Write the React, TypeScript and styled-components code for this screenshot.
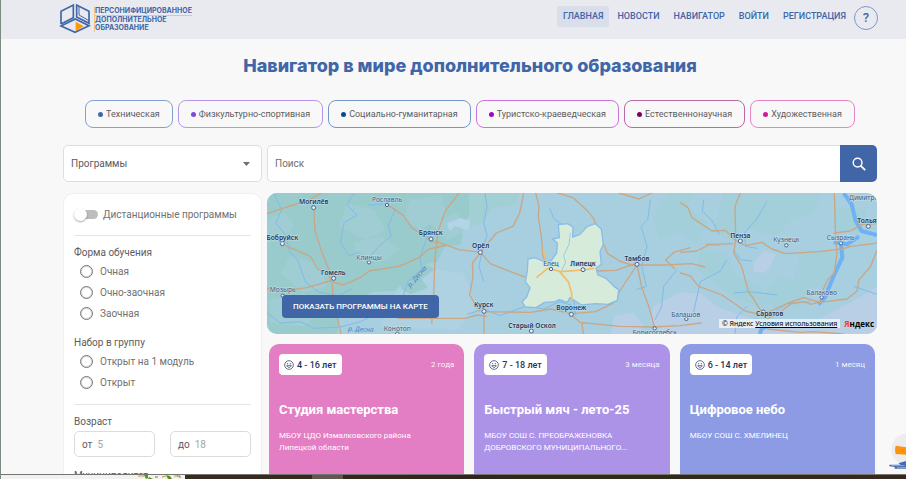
import React from "react";
import styled, { createGlobalStyle } from "styled-components";

const GlobalStyle = createGlobalStyle`
  *, *::before, *::after { box-sizing: border-box; }
  body { margin: 0; background: #f8f8f8; font-family: Roboto, "Liberation Sans", sans-serif; color: #5c5c5e; }
  button, input, select { font: inherit; color: inherit; }
`;

const blue = "#4066a8";

const Page = styled.div`
  display: flex;
  flex-direction: column;
  height: 100vh;
  overflow: hidden;
  border-left: 1px solid #7d8a80;
`;

const Header = styled.header`
  display: flex;
  flex: none;
  align-items: flex-start;
  justify-content: space-between;
  height: 39px;
  padding: 3px 28px 0 58px;
  background: #e9eaef;
`;

const Logo = styled.a`
  display: flex;
  align-items: flex-start;
  gap: 3px;
  color: ${blue};
  text-decoration: none;
`;

const LogoText = styled.span`
  display: flex;
  flex-direction: column;
  margin-top: 4px;
  border-left: 1px solid #f6c27c;
  font: 700 7px/8px Inter, sans-serif;
`;

const LogoLine = styled.span<{ $lined?: boolean }>`
  border-bottom: ${(p) => (p.$lined ? "1px solid #f6c27c" : "0")};
`;

const Nav = styled.nav`
  display: flex;
  align-items: center;
  gap: 2px;
`;

const NavLink = styled.a<{ $active?: boolean }>`
  padding: 0 6px;
  border-radius: 2px;
  background: ${(p) => (p.$active ? "#d8deea" : "transparent")};
  color: ${blue};
  font-size: 9px;
  font-weight: 500;
  line-height: 21px;
  text-decoration: none;
`;

const HelpButton = styled.button`
  width: 24px;
  height: 24px;
  margin-top: 3px;
  padding: 0;
  border: 1px solid #7d98c8;
  border-radius: 50%;
  background: transparent;
  color: ${blue};
  font-size: 13px;
  font-weight: 500;
  line-height: 20px;
`;

const Main = styled.main`
  flex: 1;
  min-height: 0;
  overflow: hidden;
  padding: 15px 29px 0 62px;
`;

const Title = styled.h1`
  margin: 0;
  color: ${blue};
  font: 800 18px/24px Inter, sans-serif;
  text-align: center;
`;

const Chips = styled.div`
  display: flex;
  justify-content: center;
  gap: 5px;
  margin-top: 22px;
`;

const Chip = styled.button<{ $line: string; $dot: string }>`
  display: flex;
  align-items: center;
  gap: 3px;
  height: 28px;
  padding: 0 12px;
  border: 1px solid ${(p) => p.$line};
  border-radius: 8px;
  background: transparent;
  font-size: 9px;
  white-space: nowrap;

  &::before {
    content: "";
    width: 5px;
    height: 5px;
    border-radius: 50%;
    background: ${(p) => p.$dot};
  }
`;

const Columns = styled.div`
  display: grid;
  grid-template-columns: 199px minmax(0, 1fr);
  gap: 11px 5px;
  align-items: start;
  margin-top: 17px;
`;

const SelectBox = styled.div`
  display: grid;
  align-items: center;
  height: 37px;

  & > * { grid-area: 1 / 1; }
  & > svg { justify-self: end; margin-right: 12px; pointer-events: none; }
`;

const Select = styled.select`
  width: 100%;
  height: 100%;
  padding: 0 7px;
  border: 1px solid #dedede;
  border-radius: 5px;
  appearance: none;
  background: #fff;
  font-size: 10px;
`;

const Search = styled.form`
  display: flex;
  height: 37px;
`;

const SearchInput = styled.input`
  flex: 1;
  min-width: 0;
  padding: 0 7px;
  border: 1px solid #dedede;
  border-right: 0;
  border-radius: 5px 0 0 5px;
  background: #fff;
  font-size: 10px;

  &::placeholder { color: #707070; opacity: 1; }
`;

const SearchButton = styled.button`
  display: grid;
  place-items: center;
  width: 37px;
  padding: 0;
  border: 0;
  border-radius: 0 5px 5px 0;
  background: ${blue};
  color: #fff;
`;

const Sidebar = styled.aside`
  padding: 10px 10px 20px;
  border: 1px solid #f0f0f0;
  border-radius: 10px;
  background: #fff;
  font-size: 10px;
`;

const SwitchLabel = styled.label`
  display: flex;
  align-items: center;
  gap: 5px;
  height: 20px;
  color: #707070;
`;

const Switch = styled.input`
  display: flex;
  align-items: center;
  width: 24px;
  height: 9px;
  margin: 0;
  border-radius: 5px;
  appearance: none;
  background: linear-gradient(90deg, transparent 8px, #bdbdbd 8px);

  &::before {
    content: "";
    flex: none;
    width: 13px;
    height: 13px;
    border-radius: 50%;
    background: #fff;
    box-shadow: 0 1px 2px rgba(0, 0, 0, 0.35);
  }
  &:checked { background: #9fb2d3; }
  &:checked::before { margin-left: 11px; background: ${blue}; }
`;

const Divider = styled.hr`
  height: 1px;
  margin: 11px 0 9px;
  border: 0;
  background: #e6e6e6;
`;

const Group = styled.fieldset`
  min-width: 0;
  margin: 0 0 11px;
  padding: 0;
  border: 0;
`;

const GroupTitle = styled.legend`
  padding: 0;
  line-height: 16px;
`;

const RadioRow = styled.label`
  display: flex;
  align-items: center;
  gap: 7px;
  height: 21px;
  padding-left: 6px;
  color: #707070;
`;

const Radio = styled.input`
  width: 13px;
  height: 13px;
  margin: 0;
  border: 1px solid #777;
  outline: 1px solid rgba(119, 119, 119, 0.3);
  outline-offset: -2px;
  border-radius: 50%;
  appearance: none;

  &:checked { box-shadow: inset 0 0 0 3px #fff; background: ${blue}; }
`;

const AgeRow = styled.div`
  display: grid;
  grid-template-columns: 1fr 1fr;
  gap: 15px;
  padding-top: 1px;
`;

const AgeField = styled.label`
  display: flex;
  align-items: center;
  gap: 5px;
  min-width: 0;
  height: 26px;
  padding: 0 7px;
  border: 1px solid #dcdcdc;
  border-radius: 5px;
`;

const AgeInput = styled.input`
  flex: 1;
  width: 0;
  min-width: 0;
  padding: 0;
  border: 0;
  background: transparent;

  &::placeholder { color: #a5a5a5; opacity: 1; }
`;

const MapBox = styled.section`
  position: relative;
  height: 141px;
  overflow: hidden;
  border-radius: 10px;

  & > svg { display: block; width: 100%; height: 100%; }
`;

const MapButton = styled.button`
  position: absolute;
  left: 15px;
  bottom: 16px;
  height: 23px;
  padding: 0 11px;
  border: 0;
  border-radius: 4px;
  background: ${blue};
  color: #fff;
  font-size: 8px;
  font-weight: 500;
`;

const MapCredits = styled.div`
  position: absolute;
  right: 3px;
  bottom: 6px;
  display: flex;
  align-items: center;
  gap: 4px;
  color: #000;
  font: 7px/9px "Noto Sans", sans-serif;
`;

const Terms = styled.span`
  padding: 0 3px;
  background: rgba(255, 255, 255, 0.65);

  & > a { color: inherit; }
`;

const Brand = styled.span`
  font: 700 8px/9px "Open Sans", sans-serif;
`;

const BrandInitial = styled.span`
  color: #fc3f1d;
`;

const Results = styled.div`
  min-width: 0;
`;

const Cards = styled.div`
  display: grid;
  grid-template-columns: repeat(3, minmax(0, 1fr));
  gap: 10px;
  padding: 10px 2px 0;
`;

const Card = styled.article<{ $color: string }>`
  min-height: 170px;
  padding: 10px;
  border-radius: 10px;
  background: ${(p) => p.$color};
  color: #fff;
`;

const CardTop = styled.div`
  display: flex;
  align-items: center;
  justify-content: space-between;
  font-size: 8px;
`;

const Age = styled.span`
  display: flex;
  align-items: center;
  gap: 3px;
  height: 21px;
  padding: 0 5px;
  border-radius: 4px;
  background: #fff;
  color: #24355c;
  font-size: 9px;
  font-weight: 500;
`;

const Duration = styled.span`
  opacity: 0.9;
`;

const CardTitle = styled.h2`
  margin: 26px 0 11px;
  font-size: 13px;
  font-weight: 700;
  line-height: 18px;
`;

const Organisation = styled.p`
  margin: 0;
  font-size: 8px;
  line-height: 12px;
`;

const Helper = styled.button`
  position: fixed;
  right: 0;
  bottom: 7px;
  width: 17px;
  height: 42px;
  padding: 0;
  border: 0;
  background: transparent;

  & > svg { display: block; }
`;

const Taskbar = styled.footer`
  display: flex;
  flex: none;
  align-items: flex-start;
  height: 5px;
  overflow: hidden;
  border-top: 1px solid #77736f;
  background: linear-gradient(90deg, #3a3027, #34291f 35%, #30241e 50%, #2c2b1b 60%, #352820);
`;

const TaskSearch = styled.div`
  display: flex;
  justify-content: flex-end;
  width: 184px;
  height: 5px;
  padding-right: 3px;
  background: #f1f1f1;
`;

const TaskItem = styled.div`
  width: 31px;
  height: 5px;
  margin-left: 127px;
  background: #5f5853;
`;

const chips = [
  ["Техническая", "#83a0d2", "#4066b0"],
  ["Физкультурно-спортивная", "#b796ea", "#7a4cd8"],
  ["Социально-гуманитарная", "#7398c8", "#084a94"],
  ["Туристско-краеведческая", "#cb74e0", "#a006c8"],
  ["Естественнонаучная", "#b96aa5", "#7a0458"],
  ["Художественная", "#e486c8", "#d8149a"],
];

const cards = [
  { color: "#e37dc4", age: "4 - 16 лет", time: "2 года", title: "Студия мастерства", org: ["МБОУ ЦДО Измалковского района", "Липецкой области"] },
  { color: "#ac93e8", age: "7 - 18 лет", time: "3 месяца", title: "Быстрый мяч - лето-25", org: ["МБОУ СОШ С. ПРЕОБРАЖЕНОВКА", "ДОБРОВСКОГО МУНИЦИПАЛЬНОГО..."] },
  { color: "#8c9be4", age: "6 - 14 лет", time: "1 месяц", title: "Цифровое небо", org: ["МБОУ СОШ С. ХМЕЛИНЕЦ"] },
];

const LogoMark = () => (
  <svg width="32" height="31" viewBox="0 0 96 93" fill="none" stroke={blue} strokeWidth="5" aria-hidden="true">
    <path d="M6 64V25L43 6v38L6 63" />
    <path d="M53 6v36l37 19V25z" />
    <path d="M60 12v24l30 17" strokeWidth="3" />
    <path d="M6 69l43-21 41 20-42 20z" />
    <path d="M50 56v28l24-14z" fill="#ff9800" stroke="none" />
  </svg>
);

const Smile = () => (
  <svg width="10" height="10" viewBox="0 0 30 30" fill="none" stroke="#3b4a6e" strokeWidth="2.4" aria-hidden="true">
    <circle cx="15" cy="15" r="13" />
    <path d="M11 9v4M19 9v4M8 17h14M9 17c1 7 11 7 12 0" />
  </svg>
);

// Map units are a third of a pixel at the base width.
type Town = [string, number, number, number, number, boolean];
const towns: Town[] = [
  ["Могилёв", 140, 32, 140, 44, true],
  ["Рославль", 360, 28, 360, 36, false],
  ["Бобруйск", 46, 142, 46, 152, true],
  ["Брянск", 491, 126, 492, 138, true],
  ["Клинцы", 306, 200, 306, 208, false],
  ["Гомель", 199, 246, 200, 256, true],
  ["Мозырь", 47, 298, 47, 308, false],
  ["Конотоп", 391, 414, 391, 422, false],
  ["Орёл", 641, 166, 640, 178, true],
  ["Елец", 852, 220, 852, 228, false],
  ["Липецк", 948, 218, 948, 230, true],
  ["Тамбов", 1110, 204, 1110, 214, true],
  ["Курск", 650, 342, 651, 355, true],
  ["Воронеж", 913, 351, 913, 364, true],
  ["Старый Оскол", 795, 404, 793, 414, true],
  ["Балашов", 1256, 371, 1258, 378, false],
  ["Борисоглебск", 1163, 427, 1163, 406, false],
  ["Пенза", 1420, 135, 1420, 144, true],
  ["Кузнецк", 1558, 147, 1558, 157, false],
  ["Сызрань", 1721, 140, 1722, 151, false],
  ["Димитровград", 1818, 20, 1830, 2, false],
  ["Тольятти", 1816, 90, 1804, 100, true],
  ["Балаково", 1664, 305, 1664, 313, false],
  ["Саратов", 1508, 370, 1489, 357, true],
];

const MapArt = () => (
  <svg viewBox="0 0 1830 423" preserveAspectRatio="xMidYMid slice" role="img" aria-label="Карта Липецкой области">
    <rect width="1830" height="423" fill="#a8cfe0" />
    <g fill="#99cbcd">
      <path d="M0 0H760l-16 20-40-4-40 30-48 8-26 40-8 60-50 10-22 44-40 6 8 36-64 10-30 34-66 2-62 32-38 44-8 52H0z" />
      <path d="M760 0l-14 34-70 10-30 46-40 14V0z" fill="#a2cfd3" />
      <path d="M1200 0h80l-20 40 60 52-32 60-50-34-60 20-20-60z M1370 0h300l-32 60-60 14-50 54-90-20-40 34-60-22z M1300 170l80 10 30 70 70 30 10 60-80-20-120-90z M1540 250l90 30-30 60-80 4-40-30z M1700 40l100 10-20 70-70-10z M1600 170l140 10-60 110-100-20z" fill="#9fced6" opacity=".6" />
    </g>
    <g fill="#a6d0d9" opacity=".55">
      <path d="M0 80l50-20 30 30-20 50-60 10zM70 190l80 20 30 70-70 20-70-60zM240 30l80 20 36 60-60 30-80-40zM260 150l80-20 60 40-50 34-80-6zM430 20l90-12 20 60-80 40-50-30zM490 90l80-30 30 50-60 30zM10 320l100-20 60 50-60 50-100-10z" />
    </g>
    <path d="M390 290l120-60 80 10 40 100-60 70-230-8z" fill="#afd2e3" />
    <path d="M400 248l70-38 34 18-40 30 18 26-50 20-30-16z" fill="#99cbcd" />
    <g fill="#b9cfe5">
      <path d="M1160 340l80-42 60 4 60 44 90 30 60 24 140-18 130-70 50-30v141h-640l-40-36z" />
      <path d="M1040 370l60-10 32 40-20 23h-80z" />
      <path d="M1460 210l30-36 36 10-16 38-20 18-30-4z" />
      <path d="M540 90l40-14 30 8-6 28-40-12-16 14z" fill="#b2d5e7" />
    </g>
    <g fill="none" stroke="#7fbbe8" strokeWidth="3" strokeLinejoin="round">
      <path d="M20 0l24 50-18 40 30 36 12 50 24 26 24 66 40 30 60 10 40-22M260 0l-20 36 30 30-38 22-12 60 28 42 24-12 30 20 40-44 30-24-8-34 20-44-30-20-50 4M490 100l-16 50-14 44 4 34-40 36-20 56-6 40M0 360l40 30 60-4 40 20 80-4 60-16 50-24 30 4" />
      <path d="M654 0l6 40-10 50 10 36-16 54-8 40 14 46M848 46l12 30 34 26 20 30-6 60-18 56 26 30 10 90M1150 20l-8 60-20 20 18 60-16 60 14 60-30 10M1230 230l-40 50-6 60-20 40M600 364l50-16 50 20 80-30 50 10 48-22 34 10" />
      <path d="M1310 20l-4 34 30 30 22 40M1500 24l-32 56-36 40 4 40 34 6M1400 170l20 30 34 4M1380 200l-20 34-60 32-20 90M1400 300l50-4 80 10M1440 340l-30 30-6 53M1500 372l60-40 70-6M1760 280l70 24" />
    </g>
    <g fill="none" stroke="#6fb1f5" strokeWidth="12" strokeLinejoin="round">
      <path d="M1730 0l24 34 12 50 18 30 46 12M1722 154l4 40-22 46-20 48-10 26-20 20" />
      <path d="M1700 148l40 6 36-24M1500 400l-16 8-6 15" />
    </g>
    <g fill="none" stroke="#c9a684" strokeWidth="4" strokeLinejoin="round">
      <path d="M0 62l60-20 64-20 40-22M140 44l4 70 18 56 24 60 14 24M54 158l36 14 42 20 20 36 34 18 10 26M0 286l60 6 60-8 68-20 40 12 52-22 26-20 90-14 60-26 30-26 54-12M366 38l44 30 24 36 40 26 24 14M490 146l26 2 60 22 65 8M576 0l-40 52-22 60-10 80-4 120-6 80M196 270l2 50 26 110M394 376h200l36-10 30 4M640 180l-24 30 2 40-10 56 30 50" />
      <path d="M770 0l-12 60-20 40-50 20-48 58 30 34 60 24 60 22 76 2M806 0l10 40-2 30 10 70 4 50 14 28M872 0l46 14 40 36 22 26 16 46 26 60 36 22 40 14 12-2M1110 216h80l84-4 40 10M980 234l66-2 60-20M1110 216l-40 60-34 56-50 24-70 6M1110 216l14 66 20 54 20 72M651 354v68M651 356l140 2 60-10 62 14M913 366l26 22 120 12 100 2 80-4 64-8M945 390l4 33M1224 228l-28-26 24-24 50-14M1056 0l60 18 46-22" />
      <path d="M1239 28l24 16 12 30 60 40 40-2 30 30 30 16 50-10 30 20 40 14 100-6 70-8 26-8 70-8 30-10 20-36M1420 0l-16 40 2 100-6 40 24 40 20 76 16 22 24 40M1318 154l40 2M1239 178l50-4 40-20 70-2M1239 240l30 8 26 32 70 26 70 48 44 10M1702 0l4 140 4 40-8 60-20 20-14 30-6 34-30 10-20-8-40 6-40 30-44 22M1484 366l80-36 46-16 50 14 80-10 30-24 6-34 34-38 20-50M1700 120l50-6 36-20 44-2M1500 408l100 10 40-2 90 7" />
    </g>
    <path d="M874 95l28-3 16 10-1 30 22-8 22-24 24-8 18 16 6 46-10 22 4 38-16 12 6 20 24 10 24 24 14 10-4 32-28 12-36-2-44 4-34-22-8 14-24-8-12 6-32 2-26 16-32-2-10-16 14-14 10-28-14-18 6-32 2-36 20-4 24 10 26-2 16-22 2-30-14-12 20-4z" fill="#d6ebda" stroke="#89bce9" strokeWidth="4" strokeLinejoin="round" />
    <g fill="none" stroke="#efbd6b" strokeWidth="5">
      <path d="M808 254l34-28 40 10 66-5 34-5M878 236l26 30 10 34v24M828 170l10 40" />
    </g>
    <path d="M910 120l-4 34-16 34 6 20-12 24" fill="none" stroke="#9bcbe6" strokeWidth="3" />
    {towns.map(([name, x, y, cx, cy, bold]) => (
      <g key={name}>
        <circle cx={cx} cy={cy} r={bold ? 6 : 5} fill="#e4eef8" stroke="#4b6596" strokeWidth="3" />
        <text x={x} y={y} textAnchor="middle" fontFamily="Noto Sans, sans-serif" fontSize="20" fontWeight={bold ? 600 : 400} fill={bold ? "#263657" : "#44587f"} stroke="#c5e0ea" strokeWidth="3" paintOrder="stroke">{name}</text>
      </g>
    ))}
    <g fontFamily="Noto Sans, sans-serif" fontSize="20" fontStyle="italic" fill="#3f83cc">
      <text transform="translate(430 284) rotate(-49)">р. Десна</text>
      <text transform="translate(243 414) rotate(2)">р. Десна</text>
    </g>
  </svg>
);

const MobileHelper = () => (
  <Helper type="button" aria-label="Помощник">
    <svg width="17" height="42" viewBox="0 0 51 126" aria-hidden="true">
      <circle cx="55" cy="58" r="48" fill="#ededee" />
      <path d="M20 47l31 5v22l-31-2q-4-12 0-25z" fill="#ff920d" />
      <path d="M1 104h34l-7-4 23-7v23H17v-5l-16-2z" fill="#456caf" />
      <path d="M7 107h40M24 113h27" stroke="#b9c9e5" strokeWidth="2" />
    </svg>
  </Helper>
);

export default function App() {
  return (
    <>
      <GlobalStyle />
      <Page>
        <Header>
          <Logo href="#">
            <LogoMark />
            <LogoText>
              <LogoLine $lined>ПЕРСОНИФИЦИРОВАННОЕ</LogoLine>
              <LogoLine>ДОПОЛНИТЕЛЬНОЕ</LogoLine>
              <LogoLine>ОБРАЗОВАНИЕ</LogoLine>
            </LogoText>
          </Logo>
          <Nav>
            <NavLink href="#" $active>ГЛАВНАЯ</NavLink>
            <NavLink href="#">НОВОСТИ</NavLink>
            <NavLink href="#">НАВИГАТОР</NavLink>
            <NavLink href="#">ВОЙТИ</NavLink>
            <NavLink href="#">РЕГИСТРАЦИЯ</NavLink>
            <HelpButton type="button">?</HelpButton>
          </Nav>
        </Header>
        <Main>
          <Title>Навигатор в мире дополнительного образования</Title>
          <Chips>
            {chips.map(([name, line, dot]) => (
              <Chip key={name} type="button" $line={line} $dot={dot}>{name}</Chip>
            ))}
          </Chips>
          <Columns>
            <SelectBox>
              <Select aria-label="Раздел">
                <option>Программы</option>
              </Select>
              <svg width="7" height="4" viewBox="0 0 7 4" aria-hidden="true"><path d="M0 0h7L3.5 4z" fill="#707070" /></svg>
            </SelectBox>
            <Search onSubmit={(e) => e.preventDefault()}>
              <SearchInput type="search" placeholder="Поиск" aria-label="Поиск" />
              <SearchButton type="submit" aria-label="Найти">
                <svg width="14" height="14" viewBox="0 0 14 14" fill="none" stroke="currentColor" strokeWidth="1.4" aria-hidden="true">
                  <circle cx="5.6" cy="5.6" r="4.4" />
                  <path d="M8.8 8.8l4.4 4.4" strokeWidth="1.8" />
                </svg>
              </SearchButton>
            </Search>
            <Sidebar>
              <SwitchLabel><Switch type="checkbox" />Дистанционные программы</SwitchLabel>
              <Divider />
              <Group>
                <GroupTitle>Форма обучения</GroupTitle>
                {["Очная", "Очно-заочная", "Заочная"].map((t) => (
                  <RadioRow key={t}><Radio type="radio" name="form" />{t}</RadioRow>
                ))}
              </Group>
              <Group>
                <GroupTitle>Набор в группу</GroupTitle>
                {["Открыт на 1 модуль", "Открыт"].map((t) => (
                  <RadioRow key={t}><Radio type="radio" name="enrolment" />{t}</RadioRow>
                ))}
              </Group>
              <Divider />
              <Group>
                <GroupTitle>Возраст</GroupTitle>
                <AgeRow>
                  <AgeField>от<AgeInput type="text" inputMode="numeric" placeholder="5" /></AgeField>
                  <AgeField>до<AgeInput type="text" inputMode="numeric" placeholder="18" /></AgeField>
                </AgeRow>
              </Group>
              <Group>
                <GroupTitle>Муниципалитет</GroupTitle>
              </Group>
            </Sidebar>
            <Results>
              <MapBox>
                <MapArt />
                <MapButton type="button">ПОКАЗАТЬ ПРОГРАММЫ НА КАРТЕ</MapButton>
                <MapCredits>
                  <Terms>© Яндекс <a href="#">Условия использования</a></Terms>
                  <Brand><BrandInitial>Я</BrandInitial>ндекс</Brand>
                </MapCredits>
              </MapBox>
              <Cards>
                {cards.map((c) => (
                  <Card key={c.title} $color={c.color}>
                    <CardTop>
                      <Age><Smile />{c.age}</Age>
                      <Duration>{c.time}</Duration>
                    </CardTop>
                    <CardTitle>{c.title}</CardTitle>
                    {c.org.map((line) => <Organisation key={line}>{line}</Organisation>)}
                  </Card>
                ))}
              </Cards>
            </Results>
          </Columns>
        </Main>
        <Taskbar>
          <TaskSearch>
            <svg width="44" height="4" viewBox="0 0 44 4" aria-hidden="true">
              <path d="M0 1h6M24 2l4-1M36 1h4" stroke="#b69a3c" />
              <path d="M6 0h4v3l-2 1zM28 0l4 1 2 3h-4zM11 2l4 2h-5z" fill="#5f8f1f" />
              <path d="M17 2h3M39 1h3v2" stroke="#8c7a30" fill="none" />
            </svg>
          </TaskSearch>
          <TaskItem />
        </Taskbar>
        <MobileHelper />
      </Page>
    </>
  );
}
